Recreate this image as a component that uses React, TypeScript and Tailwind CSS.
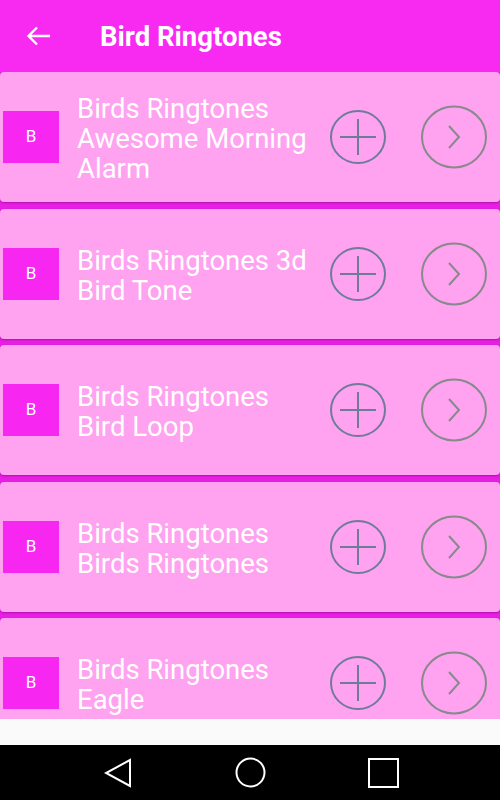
import React from 'react';

const items = [
  'Birds Ringtones Awesome Morning Alarm',
  'Birds Ringtones 3d Bird Tone',
  'Birds Ringtones Bird Loop',
  'Birds Ringtones Birds Ringtones',
  'Birds Ringtones Eagle',
];

const PlusCircle = () => (
  <svg width="58" height="58" viewBox="0 0 58 58" className="shrink-0">
    <ellipse cx="29" cy="29" rx="27" ry="26" fill="none" stroke="#6e7b9b" strokeWidth="2" />
    <line x1="11" y1="29" x2="47" y2="29" stroke="#6e7b9b" strokeWidth="2" />
    <line x1="29" y1="11" x2="29" y2="47" stroke="#6e7b9b" strokeWidth="2" />
  </svg>
);

const NextCircle = () => (
  <svg width="70" height="66" viewBox="0 0 70 66" className="shrink-0">
    <ellipse cx="35" cy="33" rx="32" ry="30.5" fill="none" stroke="#878a8c" strokeWidth="2" />
    <polyline points="30,22 40,33 30,44" fill="none" stroke="#878a8c" strokeWidth="2" />
  </svg>
);

const RingtoneCard = ({ title }: { title: string }) => (
  <div className="h-[130px] shrink-0 bg-[#ffa2f0] rounded-[4px] shadow-[0_1px_2px_rgba(120,0,110,0.5)] flex items-center">
    <div className="w-[56px] h-[52px] ml-[3px] bg-[#f826f1] flex items-center justify-center text-white text-[17px]">
      B
    </div>
    <div className="w-[240px] ml-[18px] pt-[4px] text-white text-[27.5px] leading-[30px]">{title}</div>
    <div className="ml-[12px] flex items-center">
      <PlusCircle />
      <div className="ml-[32px]">
        <NextCircle />
      </div>
    </div>
  </div>
);

export default function App() {
  return (
    <div className="w-[500px] h-[800px] flex flex-col overflow-hidden font-['Roboto',sans-serif]">
      {/* App bar */}
      <div className="h-[72px] shrink-0 bg-[#f82af2] flex items-center">
        <svg width="25" height="20" viewBox="0 0 25 20" className="ml-[26px]">
          <path d="M24 10H2.5M11 1.5L2.5 10 11 18.5" fill="none" stroke="white" strokeWidth="2.4" />
        </svg>
        <span className="ml-[49px] pt-[1px] text-white text-[27.5px] font-bold">Bird Ringtones</span>
      </div>

      {/* List */}
      <div className="flex-1 bg-[#e91ee4] overflow-hidden flex flex-col gap-[6.5px]">
        {items.map((t) => (
          <RingtoneCard key={t} title={t} />
        ))}
      </div>

      <div className="h-[26px] shrink-0 bg-[#fafafa]" />

      {/* Nav bar */}
      <div className="h-[55px] shrink-0 bg-black flex items-center">
        <svg width="28" height="30" viewBox="0 0 28 30" className="ml-[104px]">
          <polygon points="26,2 26,28 2,15" fill="none" stroke="white" strokeWidth="2" />
        </svg>
        <svg width="31" height="31" viewBox="0 0 31 31" className="ml-[103px]">
          <circle cx="15.5" cy="15.5" r="14" fill="none" stroke="white" strokeWidth="2" />
        </svg>
        <svg width="31" height="30" viewBox="0 0 31 30" className="ml-[102px]">
          <rect x="1" y="1" width="29" height="28" fill="none" stroke="white" strokeWidth="2" />
        </svg>
      </div>
    </div>
  );
}
